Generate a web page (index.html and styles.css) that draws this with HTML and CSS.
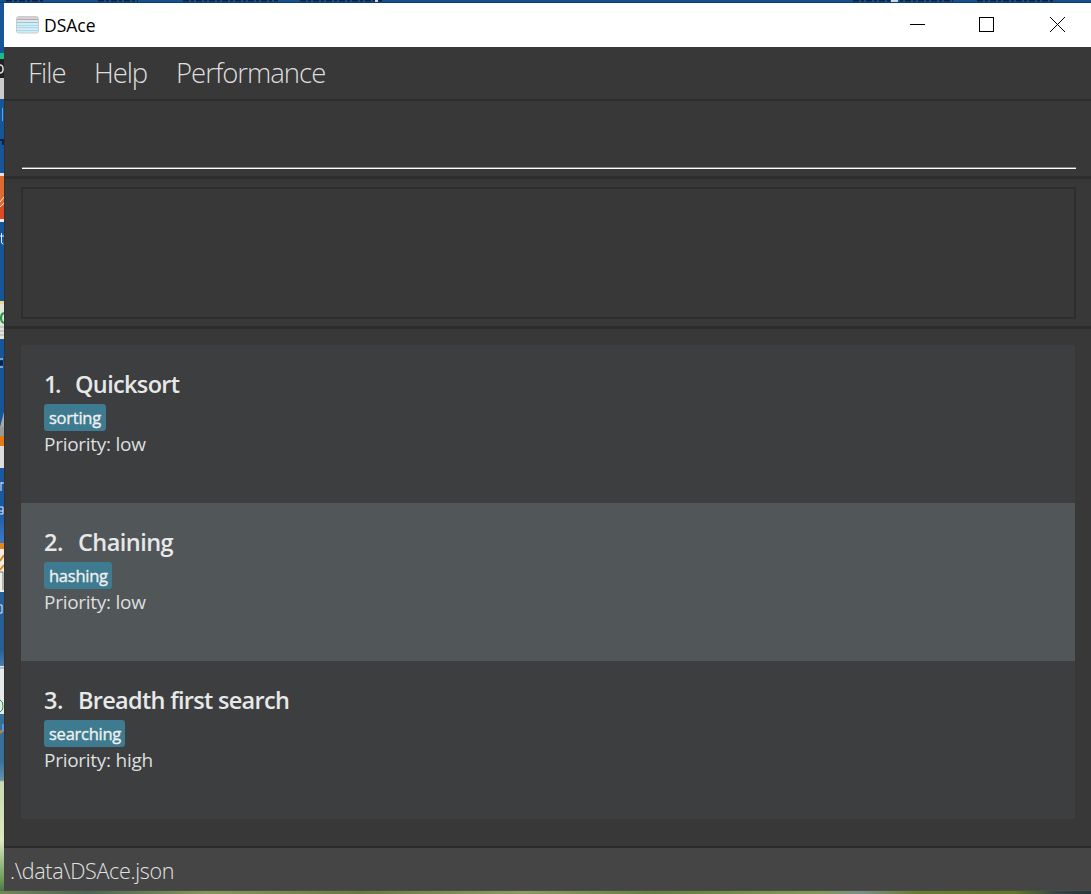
FILE: index.html
```html
<!DOCTYPE html>
<html lang="en">
<head>
<meta charset="utf-8">
<title>DSAce</title>
<link rel="stylesheet" href="styles.css">
</head>
<body>
<div class="desktop">
  <svg class="edge" width="4" height="894" viewBox="0 0 4 894" fill="none">
    <path d="M0 65q3 0 3 4t-3 4" stroke="#ddd" stroke-width="1.500"/>
    <path d="M2.500 108v13" stroke="#5fa5d8"/>
    <path d="M0 140h3v5" stroke="#0b2442" stroke-width="2"/>
    <path d="M0 202l4-5M0 207l4-4" stroke="#f0e6e0"/>
    <path d="M1.500 233v9q0 2 2 2M0 236h4" stroke="#e6edf3"/>
    <path d="M4 313q-3 1-3 5t3 5" stroke="#279447" stroke-width="2"/>
    <path d="M0 327h4M0 331h4M0 335h4" stroke="#aaa"/>
    <path d="M0 359h3M0 367h3" stroke="#e6edf3"/>
    <path d="M0 363h3" stroke="#0b2442" stroke-width="5"/>
    <path d="M0 427h4v-15z" fill="#a8a7a5"/>
    <path d="M1 482v9M1 483h3" stroke="#eee"/>
    <path d="M0 507h3v7H0M0 511h3" stroke="#e6edf3"/>
    <path d="M4 555l-4 6M4 565l-4 5" stroke="#e1871b" stroke-width="2"/>
    <path d="M0 572h3v18" stroke="#777"/>
    <path d="M0 605h2v8H0" stroke="#e6edf3"/>
    <path d="M0 668h4" stroke="#8d8f8f"/>
    <path d="M0 700q3 1 3 6t-3 6" stroke="#279447"/>
    <path d="M1 731h2v-7" stroke="#5fa5e8" stroke-width="1.500"/>
    <path d="M0 732h2" stroke="#d07a28" stroke-width="3"/>
  </svg>
  <svg class="top-edge" width="1091" height="2" viewBox="0 0 1091 2" fill="none" stroke="#0b2442" stroke-width="2">
    <path d="M6 0.500h38M98 0.500h40M183 0.500h95M300 0.500h82M853 0.500h100M977 0.500h76" stroke-dasharray="6 2 3 2"/>
    <path d="M891 1h7M375 1h3" stroke="#cfd8e2"/>
  </svg>
  <div class="window">
    <header class="titlebar">
      <svg class="app-icon" width="23" height="18" viewBox="0 0 23 18">
        <rect x="0.500" y="0.500" width="22" height="16.500" rx="2" fill="#d5eaf2" stroke="#c3ced3"/>
        <rect x="1" y="1" width="21" height="3" fill="#cbd5da"/>
        <path d="M1 3.500h21" stroke="#dc9a9a"/>
        <path d="M1 6.500h21" stroke="#a9bfca"/>
        <path d="M1 9.500h21M1 11.500h21M1 14.500h21" stroke="#a5dcee"/>
      </svg>
      <span class="app-name">DSAce</span>
      <svg class="controls" width="160" height="20" viewBox="0 0 160 20" fill="none" stroke="#000">
        <path d="M0 9.500h15"/>
        <rect x="69.500" y="2.500" width="14" height="14"/>
        <path d="M140 2l15 15M155 2l-15 15"/>
      </svg>
    </header>
    <nav class="menubar">
      <span class="menu file">File</span>
      <span class="menu help">Help</span>
      <span class="menu perf">Performance</span>
    </nav>
    <section class="command"><div class="field"></div></section>
    <section class="result"><div class="display"></div></section>
    <main class="content">
      <ul class="cards">
        <li class="card">
          <h2 class="name"><span class="num first">1.</span><span class="t-quick">Quicksort</span></h2>
          <span class="tag w-sorting">sorting</span>
          <p class="priority">Priority: low</p>
        </li>
        <li class="card alt">
          <h2 class="name"><span class="num">2.</span><span class="t-chain">Chaining</span></h2>
          <span class="tag w-hashing">hashing</span>
          <p class="priority">Priority: low</p>
        </li>
        <li class="card">
          <h2 class="name"><span class="num">3.</span><span class="t-bfs">Breadth first search</span></h2>
          <span class="tag w-searching">searching</span>
          <p class="priority">Priority: high</p>
        </li>
      </ul>
    </main>
    <footer class="statusbar"><span class="path">.\data\DSAce.json</span></footer>
  </div>
</div>
</body>
</html>
```
FILE: styles.css
```css
* { box-sizing: border-box; margin: 0; padding: 0; }
body {
  width: 1091px; height: 894px; overflow: hidden;
  font-family: "Open Sans", "Noto Sans", sans-serif;
}
.desktop {
  position: relative;
  height: 894px;
  padding: 3px 0 3px 4px;
  background:
    linear-gradient(#0f3d70, #0f3d70) 0 2px / 100% 1px no-repeat,
    linear-gradient(#174f8b, #174f8b) 0 0 / 100% 3px no-repeat,
    linear-gradient(90deg, #718854, #4b6652 8%, #829855 19%, #657b3d 33%, #899c5c 48%, #61803b 60%, #809a52 75%, #788f85 79%, #667e2c 84%, #5e7921 93%, #334346 97%, #26383e) 0 891px / 100% 3px no-repeat,
    linear-gradient(
      #17559b 53px, #18bd85 53px 59px, #222 59px 78px, #ccc 78px 99px,
      #17559b 99px 173px, #e8e0da 173px 176px, #df6a31 176px 206px, #e14824 206px 219px, #eee 219px 222px,
      #17559b 222px 301px, #e6d98f 301px 304px, #e2e4d9 304px 339px, #17559b 339px 427px,
      #989a9a 427px 436px, #e17a12 436px 446px, #ddd 446px 468px, #1b58a4 468px 510px, #3f79c5 543px,
      #e1871b 543px 549px, #f0eee8 549px 592px, #276097 592px 650px, #4c7fac 666px,
      #e7eaeb 666px 714px, #39709a 714px 760px, #6592a8 780px, #c8dcb2 782px, #dce7c4 840px, #6f9a59 880px, #3c6b47 894px);
}
/* wallpaper and icons showing past the window's edges */
.edge, .top-edge { position: absolute; left: 0; top: 0; }
.window { display: flex; flex-direction: column; height: 888px; background: #383838; }
.titlebar {
  display: flex; align-items: center; height: 44px; background: #fff;
  padding-left: 12px;
}
.app-icon { margin-top: -1px; }
.app-name { margin-left: 5px; font-size: 17.500px; line-height: 24px; color: #000; letter-spacing: 0; padding-bottom: 1px; }
.controls { margin-left: auto; margin-right: 21px; }
.menubar {
  display: flex; gap: 28px; height: 54px; padding-left: 24px;
  border-bottom: 2px solid #2c2c2c;
  font-weight: 300; font-size: 27.500px; line-height: 52px; color: #dedede;
}
.menu { white-space: nowrap; }
.file { width: 38px; letter-spacing: -0.900px; }
.help { width: 54px; letter-spacing: -1.100px; }
.perf { letter-spacing: -1px; }
.command { height: 78px; padding: 0 15px 0 18px; border-left: 1px solid #303030; border-bottom: 3px solid #2d2d2d; }
.field { height: 68px; margin-left: -1px; border-bottom: 1px solid #fff; box-shadow: inset 0 -1px #858585; }
.result { height: 150px; padding: 8px 15px 0 16px; border-left: 1px solid #303030; border-bottom: 3px solid #2d2d2d; }
.display { height: 132px; border: 2px solid #2e2e2e; }
.content { height: 519px; padding: 16px 16px 0 16px; border-left: 1px solid #303030; border-bottom: 2px solid #2b2b2b; }
.cards { list-style: none; }
.card {
  display: flex; flex-direction: column; align-items: flex-start;
  height: 158px; padding: 22px 23px; background: #3c3e3f; color: #e7e8e8;
}
.alt { background: #515658; }
.name { display: flex; height: 37px; font-size: 23.500px; font-weight: 600; line-height: 34px; white-space: nowrap; }
.num { width: 34px; letter-spacing: -0.500px; }
.first { width: 31px; letter-spacing: -2.500px; }
.t-quick { letter-spacing: -0.650px; }
.t-chain { letter-spacing: -0.560px; }
.t-bfs { letter-spacing: -0.700px; }
.tag {
  height: 27px; padding-left: 5px; border-radius: 3px; background: #3e7b91; color: #f0f0ee;
  font-size: 16.500px; line-height: 27px; letter-spacing: -0.250px; white-space: nowrap;
  -webkit-text-stroke: 0.350px #f0f0ee;
}
.w-sorting { width: 62px; }
.w-hashing { width: 68px; }
.w-searching { width: 81px; }
.priority { font-size: 19px; line-height: 27px; letter-spacing: -0.270px; color: #dedfdf; }
.statusbar { height: 43px; padding-left: 6px; background: #454545; border-bottom: 1px solid #4b4b4b; }
.path { font-size: 21.500px; line-height: 46px; font-weight: 300; color: #e3e3e3; letter-spacing: -0.330px; }
```
